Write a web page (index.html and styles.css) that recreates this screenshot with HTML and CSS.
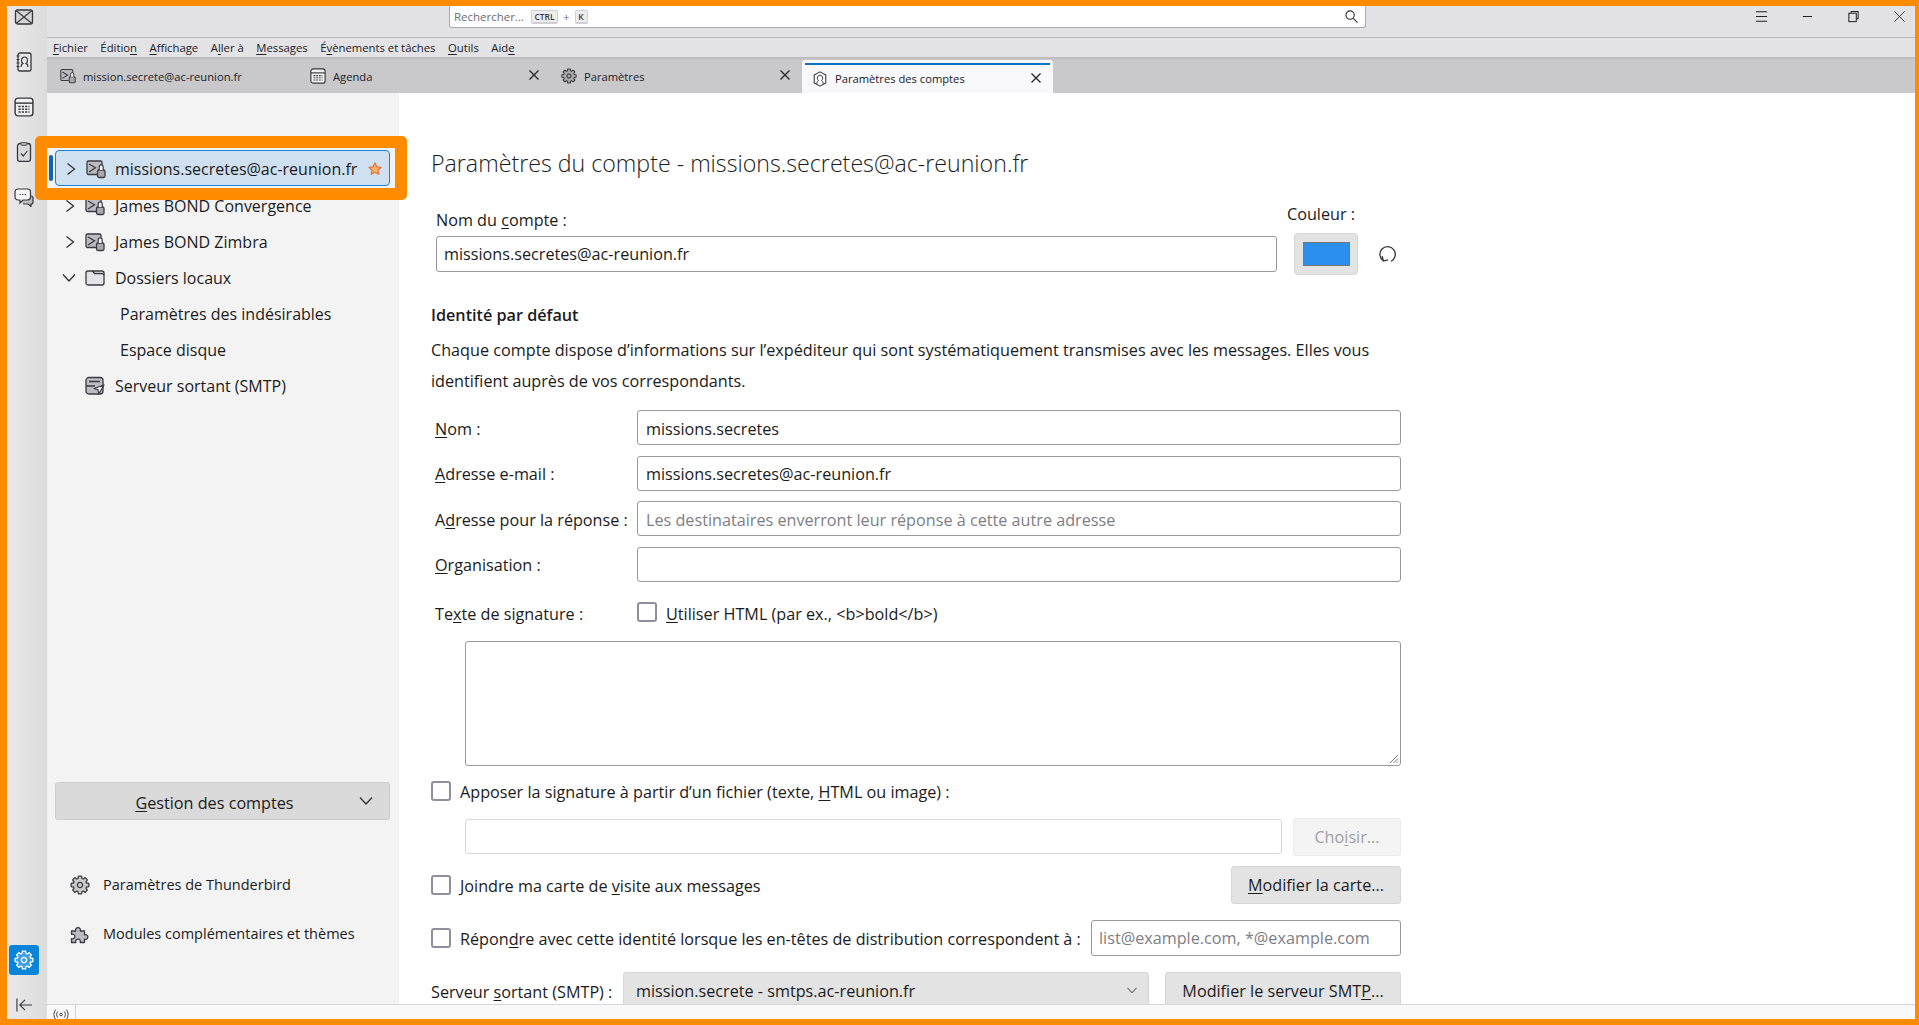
FILE: index.html
```html
<!DOCTYPE html>
<html lang="fr">
<head>
<meta charset="utf-8">
<title>Paramètres des comptes</title>
<link rel="stylesheet" href="styles.css">
</head>
<body>
<svg class="sprite" aria-hidden="true">
  <symbol id="mail-lock" viewBox="0 0 20 20">
    <path d="M11 15.500H2.500a1.500 1.500 0 0 1-1.500-1.500V3.500A1.500 1.500 0 0 1 2.500 2h12A1.500 1.500 0 0 1 16 3.500V8" fill="#bcbcc0" stroke="#3a3a3f" stroke-width="1.300"/>
    <path d="M3 5l6.500 3.800L3 13" fill="none" stroke="#3a3a3f" stroke-width="1.300"/>
    <rect x="11.500" y="11" width="7.500" height="7.500" rx="1.500" fill="#a9a9ad" stroke="#3a3a3f" stroke-width="1.300"/>
    <path d="M13.200 11V7.800a2 2 0 0 1 4 0V11" fill="#f3f3f3" stroke="#3a3a3f" stroke-width="1.200"/>
  </symbol>
  <symbol id="gear" viewBox="-10 -10 20 20">
    <path d="M8.860-1.560L8.860 1.560 6.500 1.990 6 3.190 7.370 5.160 5.160 7.370 3.190 6 1.990 6.500 1.560 8.860-1.560 8.860-1.990 6.500-3.190 6-5.160 7.370-7.370 5.160-6 3.190-6.500 1.990-8.860 1.560-8.860-1.560-6.500-1.990-6-3.190-7.370-5.160-5.160-7.370-3.190-6-1.990-6.500-1.560-8.860 1.560-8.860 1.990-6.500 3.190-6 5.160-7.370 7.370-5.160 6-3.190 6.500-1.990Z" fill="currentColor" fill-opacity=".22" stroke="currentColor" stroke-width="1.300" stroke-linejoin="round"/>
    <circle r="2.600" fill="none" stroke="currentColor" stroke-width="1.300"/>
  </symbol>
  <symbol id="calendar" viewBox="0 0 18 18">
    <rect x="1" y="1" width="16" height="16" rx="2.500" fill="#f2f2f3" stroke="currentColor" stroke-width="1.300"/>
    <path d="M1 5.500h16" stroke="currentColor" stroke-width="1.300"/>
    <path d="M4 8.500h10M4 11h10M4 13.500h10" stroke="currentColor" stroke-width="1.300" stroke-dasharray="2 1"/>
  </symbol>
  <symbol id="close" viewBox="0 0 12 12">
    <path d="M1.500 1.500l9 9M10.500 1.500l-9 9" stroke="currentColor" stroke-width="1.400" fill="none"/>
  </symbol>
  <symbol id="chev-right" viewBox="0 0 12 16">
    <path d="M2.500 2.500L9.500 8l-7 5.500" fill="none" stroke="currentColor" stroke-width="1.300"/>
  </symbol>
  <symbol id="chev-down" viewBox="0 0 16 12">
    <path d="M2 2.500L8 9l6-6.500" fill="none" stroke="currentColor" stroke-width="1.300"/>
  </symbol>
</svg>

<div class="frame">
  <nav class="rail">
    <div class="rail-top">
      <svg class="rail-icon" viewBox="0 0 20 20"><rect x="1.500" y="3" width="17" height="14" rx="2" fill="#d4d4d6" stroke="currentColor" stroke-width="1.300"/><path d="M2 3.500l8 6.500 8-6.500M2 16.500l8-6.500 8 6.500" fill="none" stroke="currentColor" stroke-width="1.200"/></svg>
      <svg class="rail-icon" viewBox="0 0 20 20"><rect x="4" y="1" width="13" height="18" rx="2" fill="#e9e9ea" stroke="currentColor" stroke-width="1.300"/><path d="M2.500 4h3M2.500 7.500h3M2.500 11h3M2.500 14.500h3" stroke="currentColor" stroke-width="1.200"/><path d="M7 15c0-2 .8-3 2-3.600-1-.7-1.500-1.800-1.500-3C7.500 6.500 8.800 5 10.500 5s3 1.500 3 3.400c0 1.200-.5 2.300-1.500 3 1.200.6 2 1.600 2 3.600" fill="none" stroke="currentColor" stroke-width="1.200"/></svg>
      <svg class="rail-icon"><use href="#calendar"/></svg>
      <svg class="rail-icon" viewBox="0 0 20 20"><rect x="3.500" y="1.500" width="13" height="18" rx="2.500" fill="#d9d9db" stroke="currentColor" stroke-width="1.300"/><rect x="7" y=".7" width="6" height="2.500" rx="1" fill="#d9d9db" stroke="currentColor"/><path d="M7 11.500l2.300 2.500 4-5" fill="none" stroke="currentColor" stroke-width="1.200"/></svg>
      <svg class="rail-icon" viewBox="0 0 20 20"><path d="M5 9h12a2 2 0 0 1 2 2v4a2 2 0 0 1-2 2v2.500L14 17H9" fill="#bdbdc0" stroke="currentColor" stroke-width="1.200"/><path d="M4 2h9.500a3 3 0 0 1 3 3v5a3 3 0 0 1-3 3H9l-3 3v-3H4a3 3 0 0 1-3-3V5a3 3 0 0 1 3-3z" fill="#f5f5f5" stroke="currentColor" stroke-width="1.200"/><path d="M5.500 7.500h6.500" stroke="currentColor" stroke-width="1.200" stroke-dasharray="1.300 1.300"/></svg>
    </div>
    <div class="rail-bottom">
      <div class="rail-active"><svg class="icon-20"><use href="#gear"/></svg></div>
      <svg class="rail-collapse" viewBox="0 0 18 14"><path d="M1 0v14M17 7H4M9.500 1.500L4 7l5.500 5.500" fill="none" stroke="currentColor" stroke-width="1.200"/></svg>
    </div>
  </nav>

  <div class="window">
    <header class="titlebar">
      <div class="search">
        <span class="search-hint">Rechercher...</span>
        <kbd class="key key-ctrl">CTRL</kbd>
        <span class="search-plus">+</span>
        <kbd class="key">K</kbd>
        <svg class="search-icon" viewBox="0 0 14 14"><circle cx="5.500" cy="5.500" r="4.500" fill="none" stroke="currentColor" stroke-width="1.200"/><path d="M9 9l4.500 4.500" stroke="currentColor" stroke-width="1.200"/></svg>
      </div>
      <div class="win-buttons">
        <svg class="win-btn" viewBox="0 0 14 14"><path d="M1 2h12M1 7h12M1 12h12" stroke="currentColor" stroke-width="1.100"/></svg>
        <svg class="win-btn" viewBox="0 0 14 14"><path d="M2 7h10" stroke="currentColor" stroke-width="1.100"/></svg>
        <svg class="win-btn" viewBox="0 0 14 14"><path d="M4.500 3V1.500h7.500v8h-2" fill="none" stroke="currentColor" stroke-width="1.100"/><rect x="2" y="3.500" width="8" height="9" fill="none" stroke="currentColor" stroke-width="1.100"/></svg>
        <svg class="win-btn" viewBox="0 0 14 14"><path d="M1.500 1.500l11 11M12.500 1.500l-11 11" stroke="currentColor" stroke-width=".9"/></svg>
      </div>
    </header>

    <div class="menubar">
      <span><u>F</u>ichier</span>
      <span>Éditio<u>n</u></span>
      <span><u>A</u>ffichage</span>
      <span>A<u>l</u>ler à</span>
      <span><u>M</u>essages</span>
      <span>É<u>v</u>ènements et tâches</span>
      <span><u>O</u>utils</span>
      <span>Aid<u>e</u></span>
    </div>

    <div class="tabs">
      <div class="tab tab-first"><svg class="icon-16"><use href="#mail-lock"/></svg><span class="tab-label">mission.secrete@ac-reunion.fr</span></div>
      <div class="tab"><svg class="icon-16"><use href="#calendar"/></svg><span class="tab-label">Agenda</span><svg class="tab-close"><use href="#close"/></svg></div>
      <div class="tab"><svg class="icon-16"><use href="#gear"/></svg><span class="tab-label">Paramètres</span><svg class="tab-close"><use href="#close"/></svg></div>
      <div class="tab tab-active">
        <svg class="icon-16" viewBox="0 0 16 18"><path d="M8 1l6.500 3.500v9L8 17l-6.500-3.500v-9z" fill="none" stroke="currentColor" stroke-width="1.200" stroke-linejoin="round"/><path d="M4.500 14.500c0-2 .6-3 1.800-3.600-.8-.7-1.300-1.700-1.300-2.900C5 6.200 6.300 4.800 8 4.800s3 1.400 3 3.200c0 1.200-.5 2.200-1.300 2.900 1.200.6 1.800 1.600 1.800 3.600" fill="none" stroke="currentColor" stroke-width="1.100"/></svg>
        <span class="tab-label">Paramètres des comptes</span><svg class="tab-close"><use href="#close"/></svg>
      </div>
    </div>

    <div class="content">
      <aside class="panel">
        <ul class="tree">
          <li class="tree-row tree-selected">
            <svg class="chev"><use href="#chev-right"/></svg>
            <svg class="tree-icon"><use href="#mail-lock"/></svg>
            <span class="tree-text">missions.secretes@ac-reunion.fr</span>
            <svg class="star" viewBox="0 0 14 14"><path d="M7 1l1.800 3.800 4.200.5-3.100 2.900.8 4.100L7 10.300l-3.700 2 .8-4.100L1 5.300l4.200-.5z" fill="#f6b26b" stroke="#e8743b" stroke-width="1.300" stroke-linejoin="round"/></svg>
          </li>
          <li class="tree-row"><svg class="chev"><use href="#chev-right"/></svg><svg class="tree-icon"><use href="#mail-lock"/></svg><span class="tree-text">James BOND Convergence</span></li>
          <li class="tree-row"><svg class="chev"><use href="#chev-right"/></svg><svg class="tree-icon"><use href="#mail-lock"/></svg><span class="tree-text">James BOND Zimbra</span></li>
          <li class="tree-row">
            <svg class="chev chev-open"><use href="#chev-down"/></svg>
            <svg class="tree-icon" viewBox="0 0 20 20"><path d="M1 5a2 2 0 0 1 2-2h4.500l2 2.500H17a2 2 0 0 1 2 2V15a2 2 0 0 1-2 2H3a2 2 0 0 1-2-2z" fill="#e4e4e6" stroke="#3a3a3f" stroke-width="1.300"/><path d="M7.500 3H17a2 2 0 0 1 2 2v2" fill="none" stroke="#3a3a3f" stroke-width="1.300"/></svg>
            <span class="tree-text">Dossiers locaux</span>
          </li>
          <li class="tree-row tree-sub">Paramètres des indésirables</li>
          <li class="tree-row tree-sub">Espace disque</li>
          <li class="tree-row tree-leaf">
            <svg class="tree-icon" viewBox="0 0 20 20"><rect x="1" y="1.500" width="17" height="16.500" rx="3" fill="#bdbdc0" stroke="#3a3a3f" stroke-width="1.300"/><path d="M1 10h9M4 5.500h11" stroke="#3a3a3f" stroke-width="1.300"/><path d="M19 9l-10 3.500 4 1.200.8 4.300z" fill="#f3f3f3" stroke="#3a3a3f" stroke-width="1.200" stroke-linejoin="round"/></svg>
            <span class="tree-text">Serveur sortant (SMTP)</span>
          </li>
        </ul>

        <div class="panel-foot">
          <button class="manage"><span><u>G</u>estion des comptes</span><svg class="manage-chev"><use href="#chev-down"/></svg></button>
          <a class="side-link"><svg class="icon-20 side-icon"><use href="#gear"/></svg>Paramètres de Thunderbird</a>
          <a class="side-link"><svg class="icon-20 side-icon" viewBox="0 0 20 20"><path d="M1.500 7h4.300a2.400 2.400 0 1 1 4.400 0h4.300v3.800a2.400 2.400 0 1 1 0 4.400V18.500H10.200a2.400 2.400 0 1 0-4.400 0H1.500v-3.800a2.400 2.400 0 1 0 0-4.400z" fill="#bdbdbf" stroke="#3a3a3f" stroke-width="1.300" stroke-linejoin="round"/></svg>Modules complémentaires et thèmes</a>
        </div>
      </aside>

      <main class="main">
        <h1 class="page-title">Paramètres du compte - missions.secretes@ac-reunion.fr</h1>

        <section class="acct">
          <div class="acct-name">
            <label class="acct-label">Nom du <u>c</u>ompte :</label>
            <input class="field" value="missions.secretes@ac-reunion.fr">
          </div>
          <div class="acct-color">
            <span class="color-label">Couleur :</span>
            <div class="color-btn"><span class="color-swatch"></span></div>
          </div>
          <svg class="reset" viewBox="0 0 16 16"><path d="M11 13.700A6.500 6.500 0 1 0 4.500 13.300M3.500 9.500l1 4 4-1" fill="none" stroke="currentColor" stroke-width="1.100"/></svg>
        </section>

        <h2 class="section-title">Identité par défaut</h2>
        <p class="intro">Chaque compte dispose d’informations sur l’expéditeur qui sont systématiquement transmises avec les messages. Elles vous identifient auprès de vos correspondants.</p>

        <div class="id-grid">
          <label class="id-label"><u>N</u>om :</label><input class="field" value="missions.secretes">
          <label class="id-label"><u>A</u>dresse e-mail :</label><input class="field" value="missions.secretes@ac-reunion.fr">
          <label class="id-label">A<u>d</u>resse pour la réponse :</label><input class="field" placeholder="Les destinataires enverront leur réponse à cette autre adresse">
          <label class="id-label"><u>O</u>rganisation :</label><input class="field">
        </div>

        <div class="sig-row">
          <label class="id-label">Te<u>x</u>te de signature :</label>
          <span class="check"></span>
          <span class="check-text"><u>U</u>tiliser HTML (par ex., &lt;b&gt;bold&lt;/b&gt;)</span>
        </div>

        <div class="sig-area">
          <svg class="grip" viewBox="0 0 12 12"><path d="M11 3l-8 8M11 6.500L6.500 11M11 9.500L9.500 11" stroke="#777" stroke-width="1"/></svg>
        </div>

        <div class="line line-file"><span class="check"></span><span class="check-text">Apposer la signature à partir d’un fichier (texte, <u>H</u>TML ou image) :</span></div>

        <div class="line-picker">
          <input class="field field-disabled">
          <button class="btn btn-disabled">Cho<u>i</u>sir...</button>
        </div>

        <div class="line line-card">
          <span class="check"></span><span class="check-text">Joindre ma carte de <u>v</u>isite aux messages</span>
          <button class="btn btn-card"><u>M</u>odifier la carte...</button>
        </div>

        <div class="line line-reply">
          <span class="check"></span><span class="check-text">Répon<u>d</u>re avec cette identité lorsque les en-têtes de distribution correspondent à :</span>
          <input class="field field-reply" placeholder="list@example.com, *@example.com">
        </div>

        <div class="line line-smtp">
          <span class="smtp-label">Serveur <u>s</u>ortant (SMTP) :</span>
          <button class="btn smtp-select"><span>mission.secrete - smtps.ac-reunion.fr</span><svg class="select-chev"><use href="#chev-down"/></svg></button>
          <button class="btn smtp-edit">Modifier le serveur SMT<u>P</u>...</button>
        </div>
      </main>
    </div>

    <footer class="status">
      <span class="status-cell"><svg class="status-icon" viewBox="0 0 18 12"><circle cx="9" cy="6" r="1.500" fill="none" stroke="currentColor"/><path d="M5.500 2.500a5 5 0 0 0 0 7M12.500 2.500a5 5 0 0 1 0 7M3 .5a8.500 8.500 0 0 0 0 11M15 .5a8.500 8.500 0 0 1 0 11" fill="none" stroke="currentColor"/></svg></span>
    </footer>
  </div>
</div>
</body>
</html>
```

FILE: styles.css
```css
* { box-sizing: border-box; }
html, body { margin: 0; height: 100%; overflow: hidden; }
body {
  font-family: "Open Sans", "Noto Sans", sans-serif;
  font-size: 16.200px;
  color: #1b1b20;
  background: #fff;
}
.sprite { display: none; }
svg { display: block; flex: none; }
u { text-underline-offset: 2px; text-decoration-thickness: 1px; }

.frame {
  display: flex;
  width: 1919px;
  height: 1025px;
  border-style: solid;
  border-color: #ff8c00;
  border-width: 6px 4px 6px 7px;
  overflow: hidden;
}

/* left rail */
.rail {
  width: 40px;
  flex: none;
  display: flex;
  flex-direction: column;
  justify-content: space-between;
  align-items: center;
  background: linear-gradient(90deg, #e9e9e9, #dcdcdc);
  color: #38383d;
  padding: 1px 6px 7px 0;
}
.rail-top { display: flex; flex-direction: column; gap: 25px; align-items: center; }
.rail-icon { width: 20px; height: 20px; }
.rail-bottom { display: flex; flex-direction: column; align-items: center; gap: 23px; }
.rail-active {
  width: 30px; height: 30px;
  display: flex; align-items: center; justify-content: center;
  background: #0a84d8;
  color: #fff;
  border-radius: 3px;
}
.rail-collapse { width: 17px; height: 14px; }
.icon-20 { width: 20px; height: 20px; }
.icon-16 { width: 16px; height: 16px; color: #38383d; }

/* window column */
.window { flex: 1; min-width: 0; display: flex; flex-direction: column; }

.titlebar {
  height: 32px;
  flex: none;
  display: flex;
  background: #e2e2e5;
  border-bottom: 1px solid #b9b9bd;
  position: relative;
}
.search {
  margin-left: 402px;
  width: 917px;
  height: 22px;
  background: #fff;
  border: 1px solid #a9a9ae;
  border-top: 0;
  border-radius: 0 0 3px 3px;
  display: flex;
  align-items: center;
  padding: 0 7px 0 4px;
  font-size: 11.500px;
  color: #6d6d72;
}
.search-hint { width: 77px; }
.key {
  font-family: "Open Sans", sans-serif;
  font-size: 8.500px;
  font-weight: 600;
  color: #3b3b40;
  background: #ededf0;
  border: 1px solid #cfcfd4;
  border-bottom-width: 2px;
  border-radius: 2px;
  width: 13px;
  height: 14px;
  display: flex;
  align-items: center;
  justify-content: center;
}
.key-ctrl { width: 27px; }
.search-plus { margin: 0 5px; }
.search-icon { margin-left: auto; width: 13px; height: 13px; color: #333; }
.win-buttons {
  display: flex;
  margin-left: auto;
  margin-right: 9px;
  gap: 33px;
  align-items: center;
  color: #222;
  height: 21px;
}
.win-btn { width: 13px; height: 13px; }

.menubar {
  height: 19px;
  flex: none;
  display: flex;
  gap: 12.500px;
  align-items: center;
  background: #e3e3e6;
  padding-left: 6px;
  font-size: 11.300px;
  color: #202025;
}

.tabs {
  height: 36px;
  flex: none;
  display: flex;
  padding-left: 3px;
  align-items: flex-end;
  background: linear-gradient(#b9b9bb, #c9c9cb 3px);
}
.tab {
  width: 251px;
  height: 36px;
  display: flex;
  align-items: center;
  padding: 2px 10px 0;
  gap: 7px;
  font-size: 11.200px;
  color: #202025;
  position: relative;
}
.tab-first { width: 250px; }
.tab-label { flex: 1; white-space: nowrap; }
.tab-close { width: 12px; height: 12px; margin: -2px 1px 0 0; color: #2a2a2e; }
.tab-active {
  height: 33px;
  background: #f9f9fb;
  border-radius: 3px 3px 0 0;
  padding-top: 4px;
}
.tab-active::before {
  content: "";
  position: absolute;
  left: 3px; right: 3px; top: 3px;
  height: 2px;
  background: #0a72c8;
}

/* content */
.content { flex: 1; min-height: 0; display: flex; }
.panel {
  width: 352px;
  flex: none;
  background: #f3f3f3;
  display: flex;
  flex-direction: column;
}
.tree { list-style: none; margin: 57px 0 0; padding: 0; font-size: 16px; }
.tree-row {
  height: 36px;
  display: flex;
  align-items: center;
  padding-bottom: 1px;
  margin-left: 8px;
  margin-right: 9px;
  white-space: nowrap;
}
.chev { width: 12px; height: 16px; margin-right: 9px; color: #333; }
.chev-open { width: 16px; height: 12px; margin-left: -3px; margin-right: 8px; }
.tree-icon { width: 20px; height: 20px; margin-right: 10px; }
.tree-selected {
  position: relative;
  background: #cfe0f0;
  border: 1px solid #1a83d4;
  border-radius: 4px;
  padding-left: 8px;
  padding-top: 1px;
  padding-bottom: 0;
  margin-bottom: 2px;
}
.tree-selected .chev { margin-left: 1px; }
.tree-selected .tree-icon { margin-right: 9px; }
.tree-row:not(.tree-selected) { padding-left: 9px; }
.tree-selected::before {
  content: "";
  position: absolute;
  left: -7px; top: 4px;
  width: 4px; height: 26px;
  border-radius: 2px;
  background: #0b66b8;
}
.tree-selected::after {
  content: "";
  position: absolute;
  left: -21px; top: -15px; right: -18px; bottom: -15px;
  border: 12px solid #ff8c00;
  border-radius: 5px;
  pointer-events: none;
}
.star { width: 14px; height: 14px; margin-left: auto; margin-right: 7px; }
.tree-sub { padding-left: 65px !important; }
.tree-leaf { padding-left: 30px !important; }

.panel-foot { margin-top: auto; padding: 0 9px 46px 8px; }
.manage {
  width: 335px;
  height: 38px;
  margin-bottom: 40px;
  position: relative;
  display: flex;
  align-items: center;
  justify-content: center;
  padding: 4px 16px 0 0;
  background: #dadada;
  border: 1px solid #cdcdcd;
  border-radius: 3px;
  font: inherit;
  color: inherit;
}
.manage-chev { width: 16px; height: 12px; position: absolute; right: 15px; top: 12px; color: #333; }
.side-link {
  height: 49px;
  display: flex;
  align-items: center;
  gap: 13px;
  padding-left: 15px;
  font-size: 14.500px;
}
.side-icon { color: #3a3a3f; }

/* main */
.main {
  flex: 1;
  min-width: 0;
  overflow: hidden;
  background: #fff;
  padding: 54px 0 0 32px;
}
.page-title {
  margin: 0;
  font-size: 23.200px;
  line-height: 32px;
  font-weight: 300;
}
.acct { display: flex; margin-top: 25px; padding-left: 5px; width: 975px; }
.acct-name { width: 841px; padding-top: 6px; display: flex; flex-direction: column; gap: 6px; }
.acct-label { line-height: 20px; }
.field {
  height: 36px;
  width: 100%;
  padding: 0 7px;
  background: #fff;
  border: 1px solid #98989d;
  border-radius: 3px;
  font: inherit;
  color: inherit;
  outline: none;
}
.field::placeholder { color: #7e7e84; opacity: 1; }
.acct-color { margin-left: 10px; display: flex; flex-direction: column; }
.color-label { line-height: 20px; margin-bottom: 9px; white-space: nowrap; }
.color-btn {
  margin-left: 7px;
  width: 64px; height: 42px;
  background: #e3e3e3;
  border: 1px solid #d6d6d6;
  border-radius: 4px;
  display: flex; align-items: center; justify-content: center;
}
.color-swatch { width: 47px; height: 24px; background: #2b8ff0; border: 1px solid #777; }
.reset { width: 19px; height: 19px; margin: 41px 0 0 20px; color: #333; }

.section-title { margin: 29px 0 0; font-size: 16.200px; line-height: 22px; font-weight: 600; }
.intro { margin: 9px 0 0; line-height: 31px; width: 970px; }

.id-grid {
  margin-top: 13px;
  width: 970px;
  display: grid;
  grid-template-columns: 206px 1fr;
  grid-auto-rows: 35px;
  row-gap: 10.670px;
  align-items: center;
}
.id-grid .field { height: 35px; padding: 2px 8px 0; }
.id-label { padding: 2px 0 0 4px; white-space: nowrap; }

.sig-row { display: flex; align-items: center; margin-top: 20px; height: 20px; }
.sig-row .id-label { width: 206px; flex: none; padding-top: 4px; }
.check {
  width: 20px; height: 20px; flex: none;
  background: #fff;
  border: 2px solid #8f8f9d;
  border-radius: 3px;
}
.check-text { margin-left: 9px; padding-top: 2px; white-space: nowrap; }
.sig-row .check-text { padding-top: 4px; }
.sig-area {
  position: relative;
  margin: 19px 0 0 34px;
  width: 936px;
  height: 125px;
  border: 1px solid #98989d;
  border-radius: 3px;
}
.grip { position: absolute; right: 1px; bottom: 1px; width: 12px; height: 12px; }

.line { display: flex; align-items: center; width: 970px; }
.line-file { margin-top: 15px; height: 20px; }
.line-picker { display: flex; margin: 17px 0 0 34px; width: 936px; gap: 11px; align-items: flex-start; }
.field-disabled { margin-top: 1px; height: 35px; flex: 1; width: auto; border-color: #d7d7da; }
.btn {
  height: 38px;
  background: #e3e3e3;
  border: 1px solid #d5d5d5;
  border-radius: 3px;
  font: inherit;
  color: inherit;
  padding: 0;
  white-space: nowrap;
}
.btn-disabled { width: 108px; background: #f4f4f4; border-color: #ececec; color: #a0a0a3; }
.line-card { margin-top: 10px; }
.btn-card { margin-left: auto; width: 170px; }
.line-reply { margin-top: 16px; }
.field-reply { margin-left: auto; width: 310px; padding: 0 7px; }
.line-smtp { margin-top: 16px; }
.smtp-label { width: 192px; flex: none; padding-top: 2px; white-space: nowrap; }
.smtp-select {
  width: 526px;
  display: flex;
  align-items: center;
  justify-content: space-between;
  padding: 0 10px 0 12px;
}
.select-chev { width: 12px; height: 9px; color: #333; }
.smtp-edit { margin-left: auto; width: 236px; }

.status {
  height: 15px;
  flex: none;
  background: #f9f9fa;
  border-top: 1px solid #d5d5d9;
  display: flex;
}
.status-cell {
  width: 29px;
  border-right: 1px solid #d5d5d9;
  display: flex;
  justify-content: center;
  padding-top: 4px;
  color: #333;
}
.status-icon { width: 16px; height: 11px; }
```
